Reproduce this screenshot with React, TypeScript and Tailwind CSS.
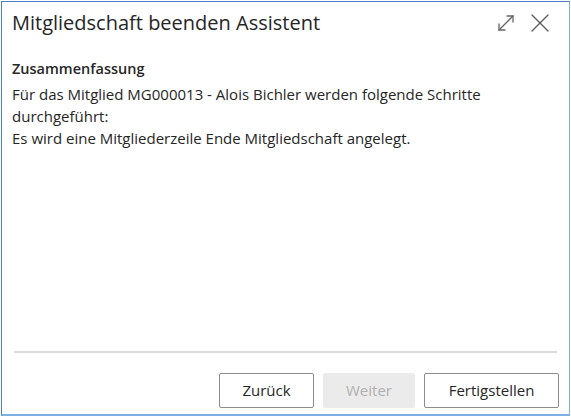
import React from 'react';

function ExpandIcon() {
  return (
    <svg width="20" height="20" viewBox="0 0 20 20" fill="none" stroke="#666" strokeWidth="1.3" strokeLinecap="round">
      <path d="M3 17 L17 3" />
      <path d="M11 3 H17 V9" />
      <path d="M3 11 V17 H9" />
    </svg>
  );
}

function CloseIcon() {
  return (
    <svg width="20" height="20" viewBox="0 0 20 20" fill="none" stroke="#5a5a5a" strokeWidth="1.3" strokeLinecap="round">
      <path d="M2 2 L18 18" />
      <path d="M18 2 L2 18" />
    </svg>
  );
}

export default function App() {
  return (
    <div className="w-[571px] h-[417px] bg-white pl-px pt-px" style={{ fontFamily: '"Open Sans", "Noto Sans", sans-serif' }}>
      <div className="w-[569px] h-[415px] border border-[#4a80c4] border-r-[#7db0e4] border-b-[#7db0e4] border-b-2 flex flex-col text-[#262626]">
        <div className="flex items-center justify-between pl-[10px] pr-[19px] pt-[4px] h-[38px]">
          <h1 className="text-[20px] leading-7">Mitgliedschaft beenden Assistent</h1>
          <div className="flex items-center gap-[14px]">
            <ExpandIcon />
            <CloseIcon />
          </div>
        </div>
        <div className="px-[10px] pt-[18px] text-[15px] leading-[22px]">
          <div className="font-semibold text-[14.5px]">Zusammenfassung</div>
          <div className="mt-[3px]">
            Für das Mitglied MG000013 - Alois Bichler werden folgende Schritte<br />
            durchgeführt:<br />
            Es wird eine Mitgliederzeile Ende Mitgliedschaft angelegt.
          </div>
        </div>
        <div className="flex-1" />
        <div className="mx-[12px] h-[2px] bg-[#dcdcdc]" />
        <div className="flex justify-end gap-[9px] pr-[10px] pt-[20px] pb-[6px] text-[15px]">
          <button className="w-[95px] h-[35px] border border-[#8c8c8c] rounded-[2px] bg-white">Zurück</button>
          <button className="w-[92px] h-[35px] rounded-[2px] bg-[#ebebeb] text-[#b0b0b0]">Weiter</button>
          <button className="w-[135px] h-[35px] border border-[#8c8c8c] rounded-[2px] bg-white">Fertigstellen</button>
        </div>
      </div>
    </div>
  );
}
